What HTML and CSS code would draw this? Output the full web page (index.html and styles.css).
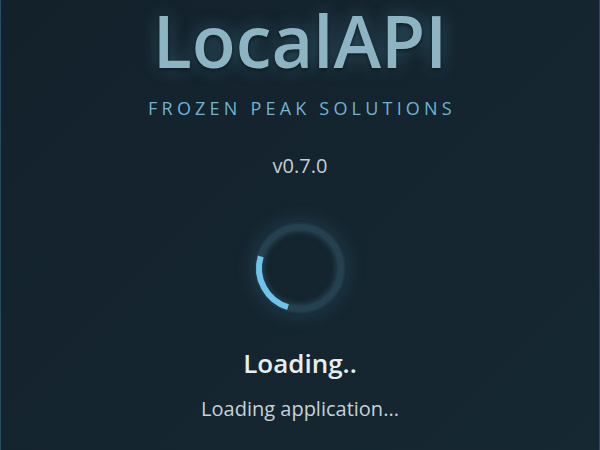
FILE: index.html
```html
<!DOCTYPE html>
<html>
<head>
<meta charset="utf-8">
<link rel="stylesheet" href="styles.css">
</head>
<body>
<div class="screen">
  <h1 class="title">LocalAPI</h1>
  <div class="company">FROZEN PEAK SOLUTIONS</div>
  <div class="version">v0.7.0</div>
  <div class="spinner">
    <svg width="96" height="96" viewBox="0 0 96 96">
      <circle cx="48" cy="48" r="41" fill="none" stroke="#25414f" stroke-width="6"/>
      <circle cx="48" cy="48" r="41" fill="none" stroke="#6ec4ea" stroke-width="6" stroke-dasharray="64 400" transform="rotate(107 48 48)"/>
    </svg>
  </div>
  <div class="status">Loading..</div>
  <div class="detail">Loading application...</div>
</div>
</body>
</html>
```
FILE: styles.css
```css
html, body { margin: 0; padding: 0; }
body {
  width: 600px;
  height: 450px;
  overflow: hidden;
  background: linear-gradient(135deg, #13212b 0%, #162832 100%);
  font-family: "Open Sans", "Noto Sans", sans-serif;
}
.screen {
  box-sizing: border-box;
  width: 600px;
  height: 450px;
  border-left: 1px solid #2b4d61;
  border-right: 1px solid #2b4d61;
  display: flex;
  flex-direction: column;
  align-items: center;
}
.title {
  margin: 0;
  font-size: 72px;
  font-weight: 600;
  line-height: 80px;
  color: #8cb4c2;
  text-shadow: 0 2px 4px rgba(0,0,0,0.5), 0 0 18px rgba(110,190,220,0.35);
}
.company {
  margin-top: 16px;
  font-size: 18px;
  letter-spacing: 4.2px;
  margin-right: -4px;
  color: #70b3d2;
  line-height: 24px;
}
.version {
  margin-top: 33px;
  font-size: 20px;
  color: #c4ced3;
  line-height: 26px;
}
.spinner {
  margin-top: 41px;
  width: 96px;
  height: 96px;
  border-radius: 50%;
  box-shadow: 0 0 20px rgba(100,180,220,0.15);
}
.spinner svg { display: block; filter: drop-shadow(0 0 3px rgba(110,196,234,0.3)); }
.status {
  margin-top: 30px;
  font-size: 26px;
  font-weight: 600;
  color: #e6eef2;
  line-height: 34px;
}
.detail {
  margin-top: 16px;
  font-size: 20px;
  color: #c5d2d8;
  line-height: 26px;
}
```
